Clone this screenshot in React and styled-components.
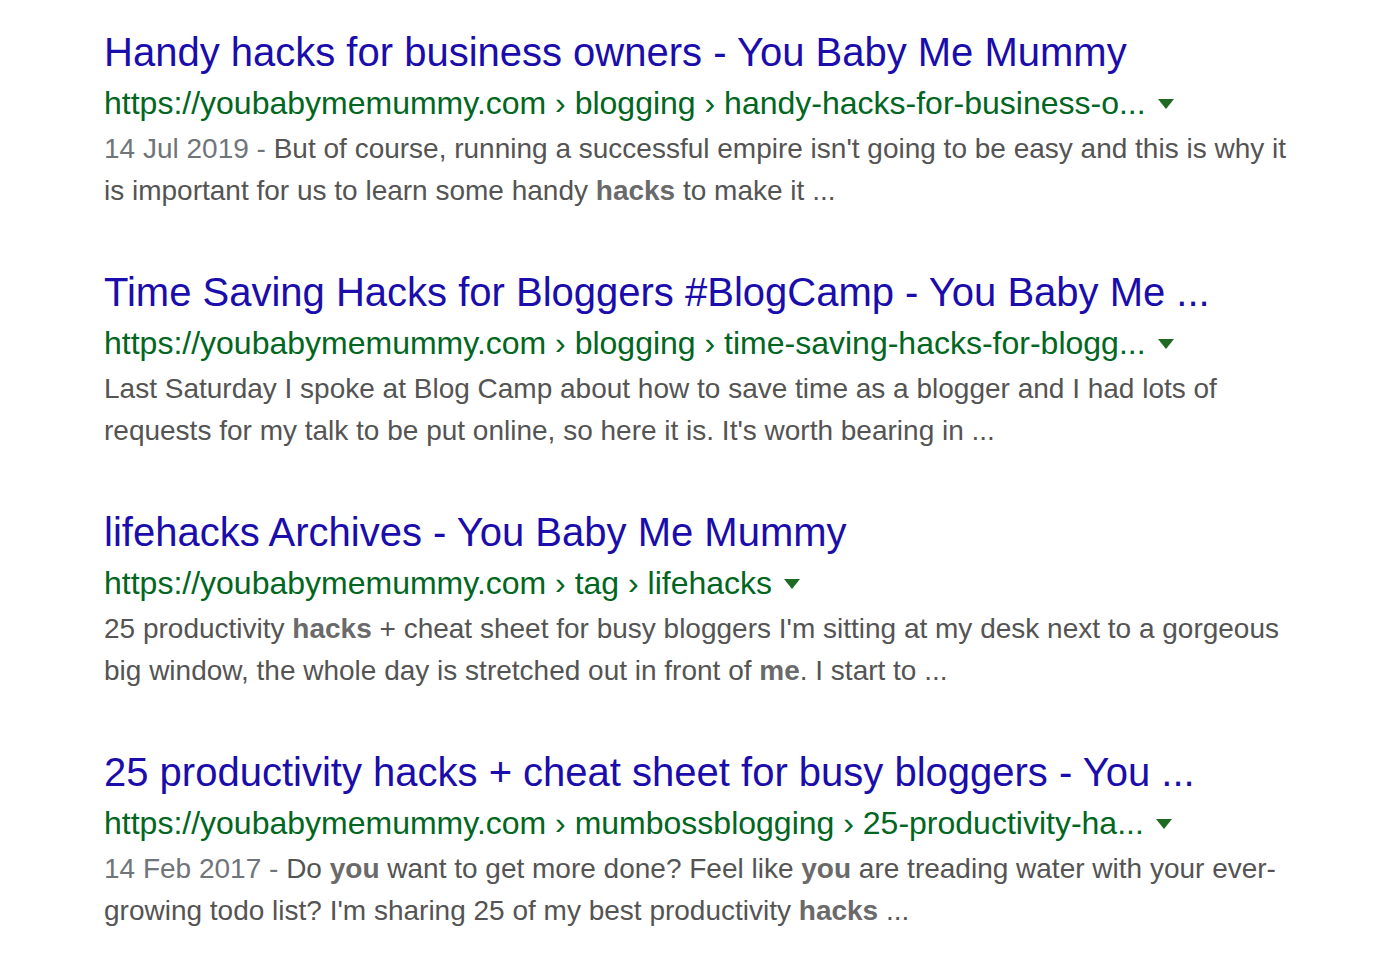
import React from "react";
import styled, { createGlobalStyle } from "styled-components";

const GlobalStyle = createGlobalStyle`
  html, body {
    margin: 0;
    padding: 0;
    background: #fff;
  }
  body {
    font-family: "Liberation Sans", Arial, sans-serif;
  }
`;

const Page = styled.div`
  width: 1384px;
  min-height: 962px;
  padding: 27px 0 0 104px;
  box-sizing: border-box;
`;

const Results = styled.div`
  width: 1190px;
  display: flex;
  flex-direction: column;
  gap: 55px;
`;

const Result = styled.div`
  display: flex;
  flex-direction: column;
`;

const Title = styled.a`
  font-size: 40px;
  line-height: 50px;
  color: #1a0dab;
  text-decoration: none;
  white-space: nowrap;
`;

const UrlRow = styled.div`
  display: flex;
  align-items: center;
  margin-top: 4px;
  height: 44px;
  font-size: 32px;
  color: #006621;
  white-space: nowrap;
`;

const Crumb = styled.span`
  &:not(:first-child)::before {
    content: " › ";
    white-space: pre;
  }
`;

const Arrow = styled.span`
  display: inline-block;
  width: 0;
  height: 0;
  margin-left: 12px;
  margin-top: 2px;
  border-left: 8px solid transparent;
  border-right: 8px solid transparent;
  border-top: 10px solid #1f6a22;
`;

const Snippet = styled.div`
  margin-top: 3px;
  font-size: 28px;
  line-height: 42px;
  color: #545454;

  b {
    color: #6a6a6a;
    font-weight: bold;
  }
`;

const Date = styled.span`
  color: #70757a;
`;

const results = [
  {
    title: "Handy hacks for business owners - You Baby Me Mummy",
    crumbs: ["https://youbabymemummy.com", "blogging", "handy-hacks-for-business-o..."],
    date: "14 Jul 2019",
    text: (
      <>
        But of course, running a successful empire isn't going to be easy and this is why it
        is important for us to learn some handy <b>hacks</b> to make it ...
      </>
    ),
  },
  {
    title: "Time Saving Hacks for Bloggers #BlogCamp - You Baby Me ...",
    crumbs: ["https://youbabymemummy.com", "blogging", "time-saving-hacks-for-blogg..."],
    text: (
      <>
        Last Saturday I spoke at Blog Camp about how to save time as a blogger and I had lots of
        requests for my talk to be put online, so here it is. It's worth bearing in ...
      </>
    ),
  },
  {
    title: "lifehacks Archives - You Baby Me Mummy",
    crumbs: ["https://youbabymemummy.com", "tag", "lifehacks"],
    text: (
      <>
        25 productivity <b>hacks</b> + cheat sheet for busy bloggers I'm sitting at my desk next to a gorgeous
        big window, the whole day is stretched out in front of <b>me</b>. I start to ...
      </>
    ),
  },
  {
    title: "25 productivity hacks + cheat sheet for busy bloggers - You ...",
    crumbs: ["https://youbabymemummy.com", "mumbossblogging", "25-productivity-ha..."],
    date: "14 Feb 2017",
    text: (
      <>
        Do <b>you</b> want to get more done? Feel like <b>you</b> are treading water with your ever-
        growing todo list? I'm sharing 25 of my best productivity <b>hacks</b> ...
      </>
    ),
  },
];

const App = () => (
  <>
    <GlobalStyle />
    <Page>
      <Results>
        {results.map((r) => (
          <Result key={r.title}>
            <Title href="#">{r.title}</Title>
            <UrlRow>
              {r.crumbs.map((c) => (
                <Crumb key={c}>{c}</Crumb>
              ))}
              <Arrow />
            </UrlRow>
            <Snippet>
              {r.date && <Date>{r.date} - </Date>}
              {r.text}
            </Snippet>
          </Result>
        ))}
      </Results>
    </Page>
  </>
);

export default App;
